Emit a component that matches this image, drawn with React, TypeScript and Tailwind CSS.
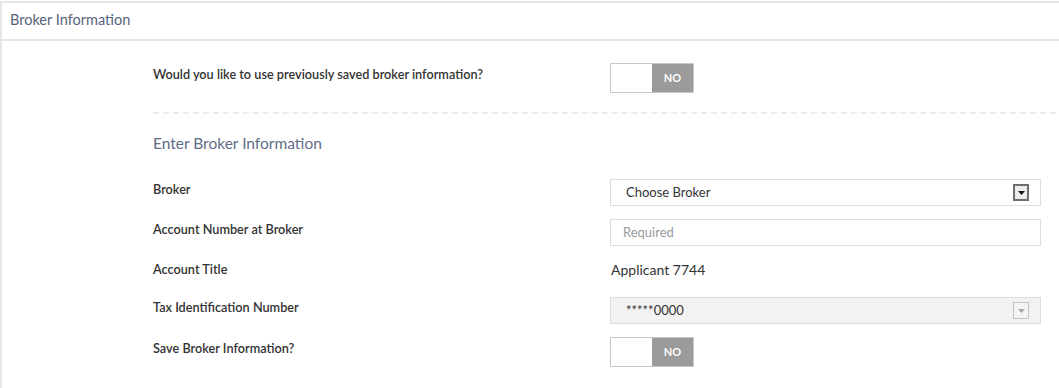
const font = { fontFamily: 'Lato, "Liberation Sans", Arial, sans-serif' }

const Toggle = () => (
  <div className="flex h-[30px] w-[84px] border border-[#c8c8c8] bg-white">
    <div className="w-[41px]" />
    <div className="flex flex-1 items-center justify-center bg-[#9b9b9b] text-[11px] font-bold text-white">NO</div>
  </div>
)

const Arrow = ({ disabled }: { disabled?: boolean }) => (
  <div
    className={
      disabled
        ? "flex h-[17px] w-[16px] items-center justify-center border border-[#c4c4c4] bg-[#f4f4f4]"
        : "flex h-[17px] w-[16px] items-center justify-center border-2 border-[#6e6e6e] bg-[#ececec]"
    }
  >
    <svg width="7" height="4" viewBox="0 0 7 4">
      <path d="M0 0h7L3.5 4z" fill={disabled ? "#a8a8a8" : "#111"} />
    </svg>
  </div>
)

const Row = ({ label, children }: { label: string; children: React.ReactNode }) => (
  <div className="flex h-[40px] items-start">
    <div className="w-[457px] pt-[1px] text-[12.7px] font-semibold text-[#333]">{label}</div>
    <div className="w-[431px]">{children}</div>
  </div>
)

export default function App() {
  return (
    <div className="h-[388px] w-[1059px] overflow-hidden bg-white pt-[1px]" style={font}>
      <div className="h-full border-l-2 border-t-2 border-[#e6e6e6]">
        {/* header */}
        <div className="flex h-[38px] items-center border-b-2 border-[#e6e6e6] px-[8px] pb-[2px] text-[14.5px] text-[#56647e]">
          Broker Information
        </div>
        <div className="pl-[151px] pt-[22px]">
          <div className="flex items-start">
            <div className="w-[457px] pt-[2px] text-[12.7px] font-semibold text-[#333]">
              Would you like to use previously saved broker information?
            </div>
            <Toggle />
          </div>
          <div className="mr-[3px] mt-[19px] border-t-2 border-dashed border-[#ececec]" />
          <div className="pb-[24px] pt-[18px] text-[15.5px] text-[#5f6d85]">Enter Broker Information</div>

          <Row label="Broker">
            <div className="flex h-[27px] items-center justify-between border border-[#dddddd] bg-white pl-[15px] pr-[11px] text-[13px] text-[#333]">
              <span>Choose Broker</span>
              <Arrow />
            </div>
          </Row>
          <Row label="Account Number at Broker">
            <div className="flex h-[27px] items-center border border-[#dddddd] bg-white pl-[12px] text-[13px] text-[#9a9a9a]">
              Required
            </div>
          </Row>
          <div className="flex h-[38px] items-start">
            <div className="w-[457px] pt-[1px] text-[12.7px] font-semibold text-[#333]">Account Title</div>
            <div className="pl-[1px] text-[14px] text-[#333]">Applicant 7744</div>
          </div>
          <Row label="Tax Identification Number">
            <div className="flex h-[27px] items-center justify-between border border-[#dddddd] bg-[#f2f2f2] pl-[15px] pr-[11px] text-[13px] text-[#333]">
              <span>*****0000</span>
              <Arrow disabled />
            </div>
          </Row>
          <div className="flex items-start">
            <div className="w-[457px] pt-[2px] text-[12.7px] font-semibold text-[#333]">Save Broker Information?</div>
            <Toggle />
          </div>
        </div>
      </div>
    </div>
  )
}
